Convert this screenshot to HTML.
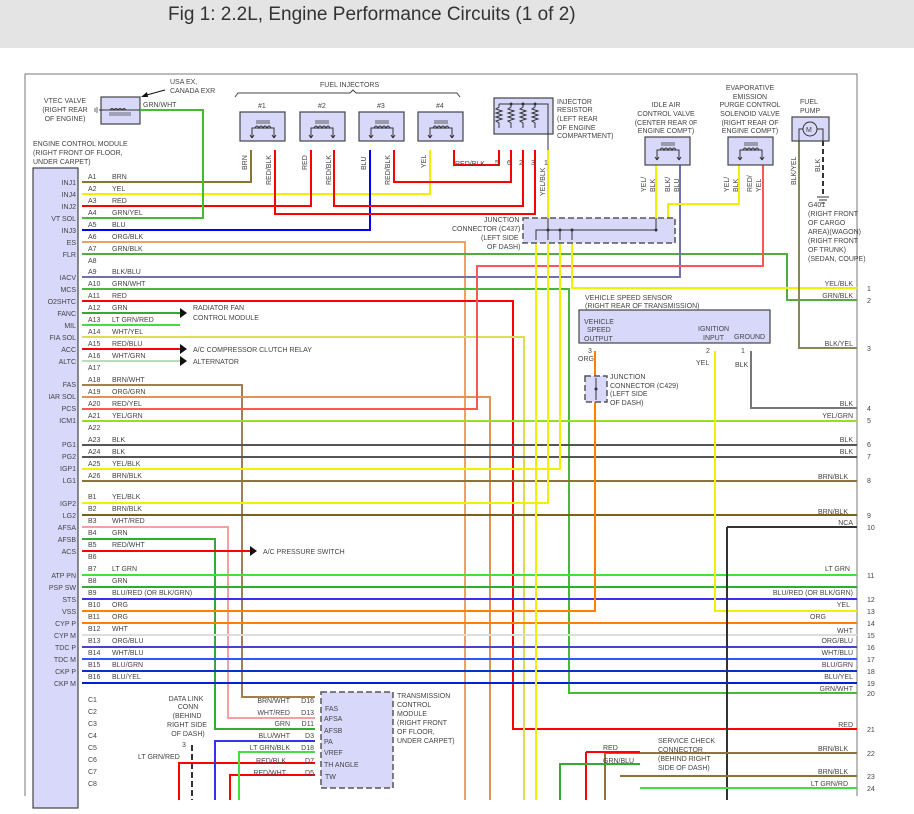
<!DOCTYPE html>
<html><head><meta charset="utf-8"><style>
html,body{margin:0;padding:0;width:914px;height:814px;overflow:hidden;background:#fff}
.hd{position:absolute;left:0;top:0;width:914px;height:48px;background:#e4e4e4;}
.hd span{position:absolute;left:168px;top:4px;font:19px "Liberation Sans",sans-serif;color:#333}
svg{position:absolute;left:0;top:0}
text{font-family:"Liberation Sans",sans-serif;font-size:7px;fill:#444}
.w{fill:none;stroke-width:2}
.b{fill:#d8d8fa;stroke:#444;stroke-width:1.2}
.d{fill:#d8d8fa;stroke:#555;stroke-width:1.5;stroke-dasharray:6 3}
.ic{fill:none;stroke:#333;stroke-width:1}
</style></head><body>
<div class="hd"><span>Fig 1: 2.2L, Engine Performance Circuits (1 of 2)</span></div>
<svg width="914" height="814" viewBox="0 0 914 814">
<defs>
<g id="coil"><path class="ic" d="M-11 14V4H11V14M-11 14l-2-3M-11 14l2-3M11 14l-2-3M11 14l2-3"/><path class="ic" d="M-8 4q2-4 4 0q2-4 4 0q2-4 4 0q2-4 4 0"/><path d="M-7 -3H7M-7 -1H7" stroke="#333" stroke-width=".8"/></g>
<g id="zz"><path class="ic" d="M0 0v3l-3 2l6 2l-6 2l6 2l-6 2l6 2l-6 2l3 2v5"/></g>
</defs>
<!-- frame -->
<path d="M25 800V74H857V800" fill="none" stroke="#777" stroke-width="1"/>
<rect x="0" y="796" width="914" height="18" fill="#fff"/>
<!-- ECM -->
<rect x="33" y="168" width="45" height="640" class="b" stroke="#888"/>
<text x="33" y="146">ENGINE CONTROL MODULE</text>
<text x="33" y="155">(RIGHT FRONT OF FLOOR,</text>
<text x="33" y="164">UNDER CARPET)</text>
<g text-anchor="end">
<text x="76" y="185">INJ1</text><text x="76" y="197">INJ4</text><text x="76" y="209">INJ2</text><text x="76" y="221">VT SOL</text><text x="76" y="233">INJ3</text><text x="76" y="245">ES</text><text x="76" y="257">FLR</text><text x="76" y="280">IACV</text><text x="76" y="292">MCS</text><text x="76" y="304">O2SHTC</text><text x="76" y="316">FANC</text><text x="76" y="328">MIL</text><text x="76" y="340">FIA SOL</text><text x="76" y="352">ACC</text><text x="76" y="364">ALTC</text><text x="76" y="387">FAS</text><text x="76" y="399">IAR SOL</text><text x="76" y="411">PCS</text><text x="76" y="423">ICM1</text><text x="76" y="447">PG1</text><text x="76" y="459">PG2</text><text x="76" y="471">IGP1</text><text x="76" y="483">LG1</text><text x="76" y="506">IGP2</text><text x="76" y="518">LG2</text><text x="76" y="530">AFSA</text><text x="76" y="542">AFSB</text><text x="76" y="554">ACS</text><text x="76" y="578">ATP PN</text><text x="76" y="590">PSP SW</text><text x="76" y="602">STS</text><text x="76" y="614">VSS</text><text x="76" y="626">CYP P</text><text x="76" y="638">CYP M</text><text x="76" y="650">TDC P</text><text x="76" y="662">TDC M</text><text x="76" y="674">CKP P</text><text x="76" y="686">CKP M</text>
</g>
<g>
<text x="88" y="179">A1</text><text x="112" y="179">BRN</text>
<text x="88" y="191">A2</text><text x="112" y="191">YEL</text>
<text x="88" y="203">A3</text><text x="112" y="203">RED</text>
<text x="88" y="215">A4</text><text x="112" y="215">GRN/YEL</text>
<text x="88" y="227">A5</text><text x="112" y="227">BLU</text>
<text x="88" y="239">A6</text><text x="112" y="239">ORG/BLK</text>
<text x="88" y="251">A7</text><text x="112" y="251">GRN/BLK</text>
<text x="88" y="263">A8</text>
<text x="88" y="274">A9</text><text x="112" y="274">BLK/BLU</text>
<text x="88" y="286">A10</text><text x="112" y="286">GRN/WHT</text>
<text x="88" y="298">A11</text><text x="112" y="298">RED</text>
<text x="88" y="310">A12</text><text x="112" y="310">GRN</text>
<text x="88" y="322">A13</text><text x="112" y="322">LT GRN/RED</text>
<text x="88" y="334">A14</text><text x="112" y="334">WHT/YEL</text>
<text x="88" y="346">A15</text><text x="112" y="346">RED/BLU</text>
<text x="88" y="358">A16</text><text x="112" y="358">WHT/GRN</text>
<text x="88" y="370">A17</text>
<text x="88" y="382">A18</text><text x="112" y="382">BRN/WHT</text>
<text x="88" y="394">A19</text><text x="112" y="394">ORG/GRN</text>
<text x="88" y="406">A20</text><text x="112" y="406">RED/YEL</text>
<text x="88" y="418">A21</text><text x="112" y="418">YEL/GRN</text>
<text x="88" y="430">A22</text>
<text x="88" y="442">A23</text><text x="112" y="442">BLK</text>
<text x="88" y="454">A24</text><text x="112" y="454">BLK</text>
<text x="88" y="466">A25</text><text x="112" y="466">YEL/BLK</text>
<text x="88" y="478">A26</text><text x="112" y="478">BRN/BLK</text>
<text x="88" y="499">B1</text><text x="112" y="499">YEL/BLK</text>
<text x="88" y="511">B2</text><text x="112" y="511">BRN/BLK</text>
<text x="88" y="523">B3</text><text x="112" y="523">WHT/RED</text>
<text x="88" y="535">B4</text><text x="112" y="535">GRN</text>
<text x="88" y="547">B5</text><text x="112" y="547">RED/WHT</text>
<text x="88" y="559">B6</text>
<text x="88" y="571">B7</text><text x="112" y="571">LT GRN</text>
<text x="88" y="583">B8</text><text x="112" y="583">GRN</text>
<text x="88" y="595">B9</text><text x="112" y="595">BLU/RED (OR BLK/GRN)</text>
<text x="88" y="607">B10</text><text x="112" y="607">ORG</text>
<text x="88" y="619">B11</text><text x="112" y="619">ORG</text>
<text x="88" y="631">B12</text><text x="112" y="631">WHT</text>
<text x="88" y="643">B13</text><text x="112" y="643">ORG/BLU</text>
<text x="88" y="655">B14</text><text x="112" y="655">WHT/BLU</text>
<text x="88" y="667">B15</text><text x="112" y="667">BLU/GRN</text>
<text x="88" y="679">B16</text><text x="112" y="679">BLU/YEL</text>
<text x="88" y="702">C1</text><text x="88" y="714">C2</text><text x="88" y="726">C3</text><text x="88" y="738">C4</text><text x="88" y="750">C5</text><text x="88" y="762">C6</text><text x="88" y="774">C7</text><text x="88" y="786">C8</text>
</g>
<path class="w" stroke="#8b7536" d="M82 182H251V150"/>
<path class="w" stroke="#f0f000" d="M82 194H430V150"/>
<path class="w" stroke="#ff0000" d="M82 206H311V150"/>
<path class="w" stroke="#44bb33" d="M82 218H203V110H190"/>
<path class="w" stroke="#0000ff" d="M82 230H370V150"/>
<path class="w" stroke="#f0a060" d="M82 242H465V800"/>
<path class="w" stroke="#55aa44" d="M82 254H787V300H857"/>
<path class="w" stroke="#7070b0" d="M82 277H680V165"/>
<path class="w" stroke="#44bb33" d="M82 289H569V693H857"/>
<path class="w" stroke="#ff0000" d="M82 301H513V729H857"/>
<path class="w" stroke="#33aa33" d="M82 313H180"/>
<path class="w" stroke="#44dd44" d="M82 325H180"/>
<path class="w" stroke="#dddd55" d="M82 337H524V800"/>
<path class="w" stroke="#ff0000" d="M82 349H180"/>
<path class="w" stroke="#bbddbb" d="M82 361H180"/>
<path class="w" stroke="#a08050" d="M82 385H242V697H315"/>
<path class="w" stroke="#e89050" d="M82 397H490V800"/>
<path class="w" stroke="#ff5555" d="M82 409H477V266H763V165"/>
<path class="w" stroke="#99dd22" d="M82 421H857"/>
<path class="w" stroke="#555" d="M82 445H857"/>
<path class="w" stroke="#555" d="M82 457H857"/>
<path class="w" stroke="#f0f000" d="M82 469H560V243"/>
<path class="w" stroke="#8b7536" d="M82 481H857"/>
<path class="w" stroke="#f0f000" d="M82 503H548V243"/>
<path class="w" stroke="#7a6020" d="M82 515H857"/>
<path class="w" stroke="#f4a0a0" d="M82 527H228V718H315"/>
<path class="w" stroke="#33aa33" d="M82 539H215V729H315"/>
<path class="w" stroke="#ff0000" d="M82 551H250"/>
<path class="w" stroke="#44dd44" d="M82 575H857"/>
<path class="w" stroke="#33aa33" d="M82 587H857"/>
<path class="w" stroke="#3333ee" d="M82 599H857"/>
<path class="w" stroke="#ff8000" d="M82 611H595V351"/>
<path class="w" stroke="#ff8000" d="M82 623H857"/>
<path class="w" stroke="#dddddd" d="M82 635H857"/>
<path class="w" stroke="#4444cc" d="M82 647H857"/>
<path class="w" stroke="#3355ff" d="M82 659H857"/>
<path class="w" stroke="#0033cc" d="M82 671H857"/>
<path class="w" stroke="#0022cc" d="M82 683H857"/>
<path class="w" stroke="#f0f000" d="M536 243V800"/>
<path class="w" stroke="#f0f000" d="M572 243V288H857"/>
<path class="w" stroke="#f0f000" d="M548 150V218"/>
<path class="w" stroke="#ff0000" d="M275 150V214H535V150"/>
<path class="w" stroke="#ff0000" d="M334 150V206H523V150"/>
<path class="w" stroke="#ff0000" d="M394 150V182H511V150"/>
<path class="w" stroke="#ff0000" d="M454 150V165H499V150"/>
<path class="w" stroke="#f0f000" d="M656 165V218"/>
<path class="w" stroke="#f0f000" d="M739 165V204H668V218"/>
<path class="w" stroke="#888855" d="M799 141V348H857"/>
<path d="M823 141V195" stroke="#333" stroke-width="2" stroke-dasharray="5 3"/>
<path d="M817 197h12M819 200h8M821 203h4" stroke="#333"/>
<path class="w" stroke="#f0f000" d="M715 351V611H857"/>
<path class="w" stroke="#777" d="M751 351V408H857"/>
<path class="w" stroke="#333" d="M727 527H857M727 527V800"/>
<path class="w" stroke="#ff0000" d="M230 800V775H315"/>
<path class="w" stroke="#ff0000" d="M179 800V763H315"/>
<path class="w" stroke="#3333ee" d="M215 800V741H315"/>
<path class="w" stroke="#44dd44" d="M239 800V752H315"/>
<path class="w" stroke="#8b7536" d="M605 753H857M605 753V800"/>
<path class="w" stroke="#ff0000" d="M586 752V800M586 752H640"/>
<path class="w" stroke="#33aa33" d="M640 764H560V800"/>
<path class="w" stroke="#8b7536" d="M620 776H857"/>
<path class="w" stroke="#44dd44" d="M640 788H857"/>
<path d="M192 745V800" stroke="#333" stroke-width="2" stroke-dasharray="6 3"/>
<path d="M180 308l7 5l-7 5z M180 344l7 5l-7 5z M180 356l7 5l-7 5z M250 546l7 5l-7 5z" fill="#111"/>
<text x="193" y="310">RADIATOR FAN</text><text x="193" y="320">CONTROL MODULE</text>
<text x="193" y="352">A/C COMPRESSOR CLUTCH RELAY</text>
<text x="193" y="364">ALTERNATOR</text>
<text x="263" y="554">A/C PRESSURE SWITCH</text>
<!-- VTEC -->
<rect x="101" y="97" width="39" height="27" class="b"/>
<path class="ic" d="M99 110H140M110 110q2-3 4 0q2-3 4 0q2-3 4 0q2-3 4 0"/><path d="M109 113h22M109 115h22M97 107v6M95 108v4" stroke="#444" stroke-width=".8"/>
<text x="65" y="103" text-anchor="middle">VTEC VALVE</text><text x="65" y="112" text-anchor="middle">(RIGHT REAR</text><text x="65" y="121" text-anchor="middle">OF ENGINE)</text>
<text x="170" y="84">USA EX,</text><text x="170" y="93">CANADA EXR</text>
<path d="M165 90L143 96" stroke="#111"/><path d="M141 97l6-5l1 5z" fill="#111"/>
<text x="143" y="107">GRN/WHT</text>
<path class="w" stroke="#44bb33" d="M140 110H190"/>
<!-- injectors -->
<text x="320" y="87">FUEL INJECTORS</text>
<path d="M235 97l3-4H350l3-3l3 3H457l3 4" fill="none" stroke="#444"/>
<rect x="240" y="112" width="45" height="29" class="b"/><rect x="300" y="112" width="45" height="29" class="b"/><rect x="359" y="112" width="45" height="29" class="b"/><rect x="418" y="112" width="45" height="29" class="b"/>
<text x="258" y="108">#1</text><text x="318" y="108">#2</text><text x="377" y="108">#3</text><text x="436" y="108">#4</text>
<use href="#coil" x="263" y="124"/><use href="#coil" x="322" y="124"/><use href="#coil" x="382" y="124"/><use href="#coil" x="441" y="124"/>
<use href="#coil" x="668" y="150"/><use href="#coil" x="751" y="150"/>
<text transform="translate(247 170) rotate(-90)">BRN</text><text transform="translate(271 185) rotate(-90)">RED/BLK</text>
<text transform="translate(307 170) rotate(-90)">RED</text><text transform="translate(331 185) rotate(-90)">RED/BLK</text>
<text transform="translate(366 170) rotate(-90)">BLU</text><text transform="translate(390 185) rotate(-90)">RED/BLK</text>
<text transform="translate(426 168) rotate(-90)">YEL</text>
<text transform="translate(545 196) rotate(-90)">YEL/BLK</text>
<text x="455" y="166">RED/BLK</text>
<!-- resistor -->
<rect x="494" y="98" width="59" height="36" class="b"/>
<use href="#zz" x="499" y="104"/><use href="#zz" x="511" y="104"/><use href="#zz" x="523" y="104"/><use href="#zz" x="535" y="104"/>
<path class="ic" d="M499 104H548V150"/>
<circle cx="511" cy="104" r="1.5" fill="#333"/><circle cx="523" cy="104" r="1.5" fill="#333"/><circle cx="535" cy="104" r="1.5" fill="#333"/>
<text x="557" y="104">INJECTOR</text><text x="557" y="112">RESISTOR</text><text x="557" y="121">(LEFT REAR</text><text x="557" y="130">OF ENGINE</text><text x="557" y="138">COMPARTMENT)</text>
<text x="495" y="165">5</text><text x="507" y="165">6</text><text x="519" y="165">2</text><text x="531" y="165">3</text><text x="544" y="165">1</text>
<!-- IAC -->
<rect x="645" y="137" width="45" height="28" class="b"/>
<use href="#coil" x="668" y="146"/>
<text x="666" y="107" text-anchor="middle">IDLE AIR</text><text x="666" y="116" text-anchor="middle">CONTROL VALVE</text><text x="666" y="125" text-anchor="middle">(CENTER REAR 0F</text><text x="666" y="133" text-anchor="middle">ENGINE COMPT)</text>
<text transform="translate(646 192) rotate(-90)">YEL/</text><text transform="translate(655 192) rotate(-90)">BLK</text>
<text transform="translate(670 192) rotate(-90)">BLK/</text><text transform="translate(679 192) rotate(-90)">BLU</text>
<!-- EVAP -->
<rect x="728" y="137" width="45" height="28" class="b"/>
<use href="#coil" x="751" y="146"/>
<text x="750" y="90" text-anchor="middle">EVAPORATIVE</text><text x="750" y="99" text-anchor="middle">EMISSION</text><text x="750" y="107" text-anchor="middle">PURGE CONTROL</text><text x="750" y="116" text-anchor="middle">SOLENOID VALVE</text><text x="750" y="125" text-anchor="middle">(RIGHT REAR OF</text><text x="750" y="133" text-anchor="middle">ENGINE COMPT)</text>
<text transform="translate(729 192) rotate(-90)">YEL/</text><text transform="translate(738 192) rotate(-90)">BLK</text>
<text transform="translate(752 192) rotate(-90)">RED/</text><text transform="translate(761 192) rotate(-90)">YEL</text>
<!-- fuel pump -->
<rect x="792" y="117" width="37" height="24" class="b"/>
<circle cx="810" cy="129" r="7" fill="none" stroke="#333"/><text x="806" y="132" font-size="8">M</text>
<path class="ic" d="M799 141V129H803M823 141V129H817"/>
<text x="800" y="104">FUEL</text><text x="800" y="113">PUMP</text>
<text transform="translate(796 185) rotate(-90)">BLK/YEL</text>
<text transform="translate(820 172) rotate(-90)">BLK</text>
<text x="808" y="207">G401</text><text x="808" y="216">(RIGHT FRONT</text><text x="808" y="225">OF CARGO</text><text x="808" y="234">AREA)(WAGON)</text><text x="808" y="243">(RIGHT FRONT</text><text x="808" y="252">OF TRUNK)</text><text x="808" y="261">(SEDAN, COUPE)</text>
<!-- junction C437 -->
<rect x="523" y="218" width="152" height="25" class="d"/>
<path d="M536 240V230H656V218M548 230V218M560 230V240M572 230V240M548 230V240" fill="none" stroke="#333"/>
<circle cx="548" cy="230" r="1.5" fill="#333"/><circle cx="560" cy="230" r="1.5" fill="#333"/><circle cx="572" cy="230" r="1.5" fill="#333"/><circle cx="656" cy="230" r="1.5" fill="#333"/>
<text x="484" y="222">JUNCTION</text><text x="452" y="231">CONNECTOR (C437)</text><text x="481" y="240">(LEFT SIDE</text><text x="487" y="249">OF DASH)</text>
<!-- VSS -->
<text x="585" y="300">VEHICLE SPEED SENSOR</text><text x="585" y="308">(RIGHT REAR OF TRANSMISSION)</text>
<rect x="579" y="310" width="191" height="33" class="b"/>
<text x="584" y="324">VEHICLE</text><text x="587" y="332">SPEED</text><text x="584" y="341">OUTPUT</text>
<text x="698" y="331">IGNITION</text><text x="703" y="340">INPUT</text><text x="734" y="339">GROUND</text>
<text x="588" y="353">3</text><text x="578" y="361">ORG</text><text x="706" y="353">2</text><text x="696" y="365">YEL</text><text x="741" y="353">1</text><text x="735" y="367">BLK</text>
<rect x="585" y="376" width="22" height="26" class="d"/>
<path class="ic" d="M596 378V400"/><circle cx="596" cy="389" r="1.5" fill="#333"/>
<text x="610" y="379">JUNCTION</text><text x="610" y="388">CONNECTOR (C429)</text><text x="610" y="396">(LEFT SIDE</text><text x="610" y="405">OF DASH)</text>
<g text-anchor="end">
<text x="853" y="286">YEL/BLK</text><text x="853" y="298">GRN/BLK</text><text x="853" y="346">BLK/YEL</text><text x="853" y="406">BLK</text><text x="853" y="418">YEL/GRN</text><text x="853" y="442">BLK</text><text x="853" y="454">BLK</text><text x="848" y="479">BRN/BLK</text><text x="848" y="514">BRN/BLK</text><text x="853" y="525">NCA</text><text x="850" y="571">LT GRN</text><text x="853" y="595">BLU/RED (OR BLK/GRN)</text><text x="850" y="607">YEL</text><text x="826" y="619">ORG</text><text x="853" y="633">WHT</text><text x="853" y="643">ORG/BLU</text><text x="853" y="655">WHT/BLU</text><text x="853" y="667">BLU/GRN</text><text x="853" y="679">BLU/YEL</text><text x="853" y="691">GRN/WHT</text><text x="853" y="727">RED</text><text x="848" y="751">BRN/BLK</text><text x="848" y="774">BRN/BLK</text><text x="848" y="786">LT GRN/RD</text>
</g>
<g>
<text x="867" y="291">1</text><text x="867" y="303">2</text><text x="867" y="351">3</text><text x="867" y="411">4</text><text x="867" y="423">5</text><text x="867" y="447">6</text><text x="867" y="459">7</text><text x="867" y="483">8</text><text x="867" y="518">9</text><text x="867" y="530">10</text><text x="867" y="578">11</text><text x="867" y="602">12</text><text x="867" y="614">13</text><text x="867" y="626">14</text><text x="867" y="638">15</text><text x="867" y="650">16</text><text x="867" y="662">17</text><text x="867" y="674">18</text><text x="867" y="686">19</text><text x="867" y="696">20</text><text x="867" y="732">21</text><text x="867" y="756">22</text><text x="867" y="779">23</text><text x="867" y="791">24</text>
</g>
<!-- TCM -->
<rect x="321" y="692" width="72" height="96" class="d"/>
<text x="397" y="698">TRANSMISSION</text><text x="397" y="707">CONTROL</text><text x="397" y="716">MODULE</text><text x="397" y="725">(RIGHT FRONT</text><text x="397" y="734">OF FLOOR,</text><text x="397" y="743">UNDER CARPET)</text>
<text x="325" y="711">FAS</text><text x="324" y="721">AFSA</text><text x="324" y="733">AFSB</text><text x="324" y="744">PA</text><text x="324" y="755">VREF</text><text x="324" y="767">TH ANGLE</text><text x="325" y="779">TW</text>
<g text-anchor="end">
<text x="290" y="703">BRN/WHT</text><text x="290" y="715">WHT/RED</text><text x="290" y="726">GRN</text><text x="290" y="738">BLU/WHT</text><text x="290" y="750">LT GRN/BLK</text><text x="286" y="763">RED/BLK</text><text x="286" y="775">RED/WHT</text>
<text x="314" y="703">D16</text><text x="314" y="715">D13</text><text x="314" y="726">D11</text><text x="314" y="738">D3</text><text x="314" y="750">D18</text><text x="314" y="763">D7</text><text x="314" y="775">D5</text>
</g>
<text x="186" y="701" text-anchor="middle">DATA LINK</text><text x="188" y="709" text-anchor="middle">CONN</text><text x="187" y="718" text-anchor="middle">(BEHIND</text><text x="187" y="727" text-anchor="middle">RIGHT SIDE</text><text x="188" y="736" text-anchor="middle">OF DASH)</text>
<text x="182" y="747">3</text><text x="138" y="759">LT GRN/RED</text>
<text x="658" y="743">SERVICE CHECK</text><text x="658" y="752">CONNECTOR</text><text x="658" y="761">(BEHIND RIGHT</text><text x="658" y="770">SIDE OF DASH)</text>
<text x="603" y="750">RED</text><text x="603" y="763">GRN/BLU</text>
</svg>
</body></html>
